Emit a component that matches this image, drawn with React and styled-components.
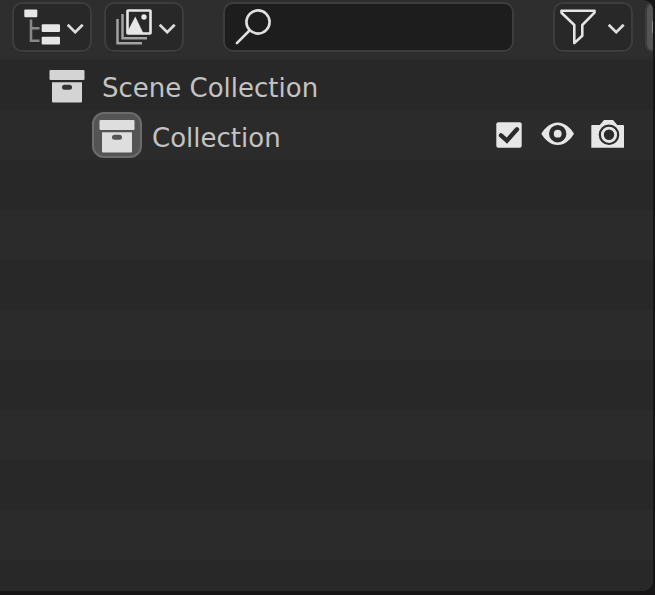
import React, { useState } from "react";
import styled, { createGlobalStyle } from "styled-components";

const GlobalStyle = createGlobalStyle`
  * { box-sizing: border-box; }
  body {
    margin: 0;
    background: #161414;
    font-family: "DejaVu Sans", sans-serif;
    color: #c3c3c3;
  }
`;

const Screen = styled.div`
  display: flex;
  min-height: 100vh;
  padding: 0 2px 4px 0;
`;

const Panel = styled.main`
  flex: 1;
  min-width: 0;
  display: flex;
  flex-direction: column;
  overflow: hidden;
  border-radius: 0 10px 10px 0;
  background: #282828;
`;

const Header = styled.header`
  display: flex;
  align-items: flex-start;
  gap: 12px;
  height: 60px;
  padding: 2px 0 0 12px;
  background: #2e2e2e;
  border-bottom: 1px solid #2a2a2a;
`;

const MenuButton = styled.button`
  flex: none;
  display: flex;
  align-items: center;
  width: 80px;
  height: 50px;
  padding: 0;
  border: 2px solid #3d3d3d;
  border-radius: 10px;
  background: #282828;
  box-shadow: 0 1px 0 #2a2a2a;
`;

const SearchField = styled.label`
  flex: 1;
  min-width: 0;
  display: flex;
  align-items: center;
  height: 50px;
  margin: 0 27px;
  padding-left: 9px;
  gap: 8px;
  border: 2px solid #3d3d3d;
  border-radius: 10px;
  background: #1d1d1d;
  box-shadow: 0 1px 0 #2a2a2a;
`;

const SearchInput = styled.input`
  flex: 1;
  min-width: 0;
  height: 40px;
  padding: 0;
  border: 0;
  outline: 0;
  background: transparent;
  color: #e6e6e6;
  font: 26px "DejaVu Sans", sans-serif;
`;

const AddButton = styled.button`
  flex: none;
  display: flex;
  align-items: center;
  justify-content: flex-end;
  width: 8px;
  height: 50px;
  padding: 0;
  border: 2px solid #3d3d3d;
  border-right: 0;
  border-radius: 10px 0 0 10px;
  background: #545454;
`;

const Tree = styled.ul`
  flex: 1;
  margin: 0;
  padding: 0;
  list-style: none;
  background: repeating-linear-gradient(#282828 0 50px, #2b2b2b 50px 100px);
`;

const Row = styled.li`
  display: flex;
  align-items: center;
  height: 50px;
  padding-left: ${(p) => 42 + p.$level * 50}px;
  padding-right: 27px;
`;

const Badge = styled.span`
  flex: none;
  display: flex;
  justify-content: center;
  align-items: center;
  width: 50px;
  height: 46px;
  margin-right: 10px;
  border: 2px solid ${(p) => (p.$active ? "#6c6c6c" : "transparent")};
  border-radius: 12px;
  background: ${(p) => (p.$active ? "#545454" : "transparent")};
`;

const Name = styled.span`
  flex: 1;
  padding-top: 6px;
  font-size: 26px;
  line-height: 44px;
  white-space: nowrap;
`;

const Toggles = styled.div`
  display: flex;
  align-items: center;
  gap: 14px;
`;

const ToggleLabel = styled.label`
  position: relative;
  display: flex;
  width: 36px;
  height: 36px;
`;

const HiddenCheck = styled.input`
  position: absolute;
  inset: 0;
  margin: 0;
  width: 100%;
  height: 100%;
  opacity: 0;
`;

const IconButton = styled.button`
  display: flex;
  width: 36px;
  height: 36px;
  padding: 0;
  border: 0;
  background: transparent;
`;

const Chevron = () => (
  <svg width="20" height="14" viewBox="0 0 20 14" fill="none" stroke="#dcdcdc" strokeWidth="2.7">
    <path d="M1.7 4.7 L9.2 12.2 L16.7 4.7" />
  </svg>
);

const TreeIcon = () => (
  <svg width="52" height="46" viewBox="14 4 52 46">
    <path d="M31 19.5 V40.8 H39.5 M31 28.3 H39.5" fill="none" stroke="#888" strokeWidth="2.6" />
    <g fill="#e6e6e6">
      <rect x="24.3" y="9.5" width="13" height="7.8" rx="1" />
      <rect x="41.7" y="24.3" width="18.3" height="7.8" rx="1" />
      <rect x="41.7" y="36.8" width="18.3" height="7.8" rx="1" />
    </g>
  </svg>
);

const ImagesIcon = () => (
  <svg width="52" height="46" viewBox="106 4 52 46" fill="none">
    <path d="M117.5 19 V43.3 H142 M122.5 14 V38.3 H147" stroke="#a2a2a2" strokeWidth="2.5" />
    <rect x="127.5" y="10.5" width="23" height="23" rx=".5" stroke="#e6e6e6" strokeWidth="2.6" />
    <path d="M128 33 V30.5 L135.3 16.5 L143.3 33 Z" fill="#e6e6e6" />
    <circle cx="144" cy="17" r="2.7" fill="#e6e6e6" />
  </svg>
);

const SearchIcon = () => (
  <svg width="38" height="38" viewBox="234 8 38 38" fill="none" stroke="#e0e0e0" strokeWidth="2.6" strokeLinecap="round">
    <circle cx="258" cy="22" r="11.6" />
    <path d="M249.5 30.5 L236.9 43.1" />
  </svg>
);

const FilterIcon = () => (
  <svg width="52" height="46" viewBox="555 4 52 46" fill="none" stroke="#e4e4e4" strokeWidth="2.6" strokeLinejoin="round">
    <path d="M561.5 10.7 H594.5 V12.7 L582.3 25 V35.7 L574.3 43.1 V25 L561.5 12.7 Z" />
  </svg>
);

const CollectionIcon = ({ color, hole }) => (
  <svg width="36" height="36" viewBox="0 0 36 36" fill={color}>
    <rect x=".5" y="3" width="35" height="10" rx="1" />
    <path d="M3 15.3 H33 V34.5 Q33 35.5 32 35.5 H4 Q3 35.5 3 34.5 Z" />
    <rect x="13" y="17.7" width="10" height="5" rx="2.5" fill={hole} />
  </svg>
);

const CheckIcon = ({ checked }) => (
  <svg width="36" height="36" viewBox="490 117 36 36">
    <rect x="496.3" y="122.2" width="25.4" height="25.6" rx="2" fill="#e6e6e6" />
    {checked && (
      <path d="M501 135.4 L506.9 140.6 L517 129.3" fill="none" stroke="#2b2b2b" strokeWidth="4.4" strokeLinecap="round" />
    )}
  </svg>
);

const EyeIcon = () => (
  <svg width="36" height="36" viewBox="540 117 36 36">
    <path d="M541.3 133.7 C545 127.5 551 122.5 557.7 122.5 S570.3 127.5 574 133.7 C570.3 140 564.5 145 557.7 145 S545 140 541.3 133.7 Z" fill="#e6e6e6" />
    <circle cx="557.7" cy="133.7" r="6.3" fill="#e6e6e6" stroke="#2b2b2b" strokeWidth="4.8" />
  </svg>
);

const CameraIcon = () => (
  <svg width="36" height="36" viewBox="590 117 36 36">
    <path d="M592 125 H599.7 L604 120 H613 L617.3 125 H623 Q624 125 624 126 V147.7 H591.3 V126 Q591.3 125 592 125 Z" fill="#e6e6e6" />
    <g fill="none" stroke="#2b2b2b">
      <circle cx="609" cy="134.8" r="9.2" strokeWidth="2.2" />
      <circle cx="609" cy="134.8" r="5.2" fill="#2b2b2b" strokeWidth="0" />
    </g>
  </svg>
);

export default function App() {
  const [included, setIncluded] = useState(true);
  return (
    <>
      <GlobalStyle />
      <Screen>
        <Panel>
          <Header>
            <MenuButton aria-label="Editor type"><TreeIcon /><Chevron /></MenuButton>
            <MenuButton aria-label="Display mode"><ImagesIcon /><Chevron /></MenuButton>
            <SearchField>
              <SearchIcon />
              <SearchInput type="text" aria-label="Search" />
            </SearchField>
            <MenuButton aria-label="Filter"><FilterIcon /><Chevron /></MenuButton>
            <AddButton aria-label="New collection">
              <svg width="1" height="12" viewBox="0 0 1 12"><rect width="1" height="12" fill="#8a8a8a" /></svg>
            </AddButton>
          </Header>
          <Tree>
            <Row $level={0}>
              <Badge><CollectionIcon color="#d4d4d4" hole="#333" /></Badge>
              <Name>Scene Collection</Name>
            </Row>
            <Row $level={1}>
              <Badge $active><CollectionIcon color="#dedede" hole="#555" /></Badge>
              <Name>Collection</Name>
              <Toggles>
                <ToggleLabel>
                  <HiddenCheck
                    type="checkbox"
                    aria-label="Include in view layer"
                    checked={included}
                    onChange={(e) => setIncluded(e.target.checked)}
                  />
                  <CheckIcon checked={included} />
                </ToggleLabel>
                <IconButton aria-label="Hide in viewport"><EyeIcon /></IconButton>
                <IconButton aria-label="Disable in renders"><CameraIcon /></IconButton>
              </Toggles>
            </Row>
          </Tree>
        </Panel>
      </Screen>
    </>
  );
}
